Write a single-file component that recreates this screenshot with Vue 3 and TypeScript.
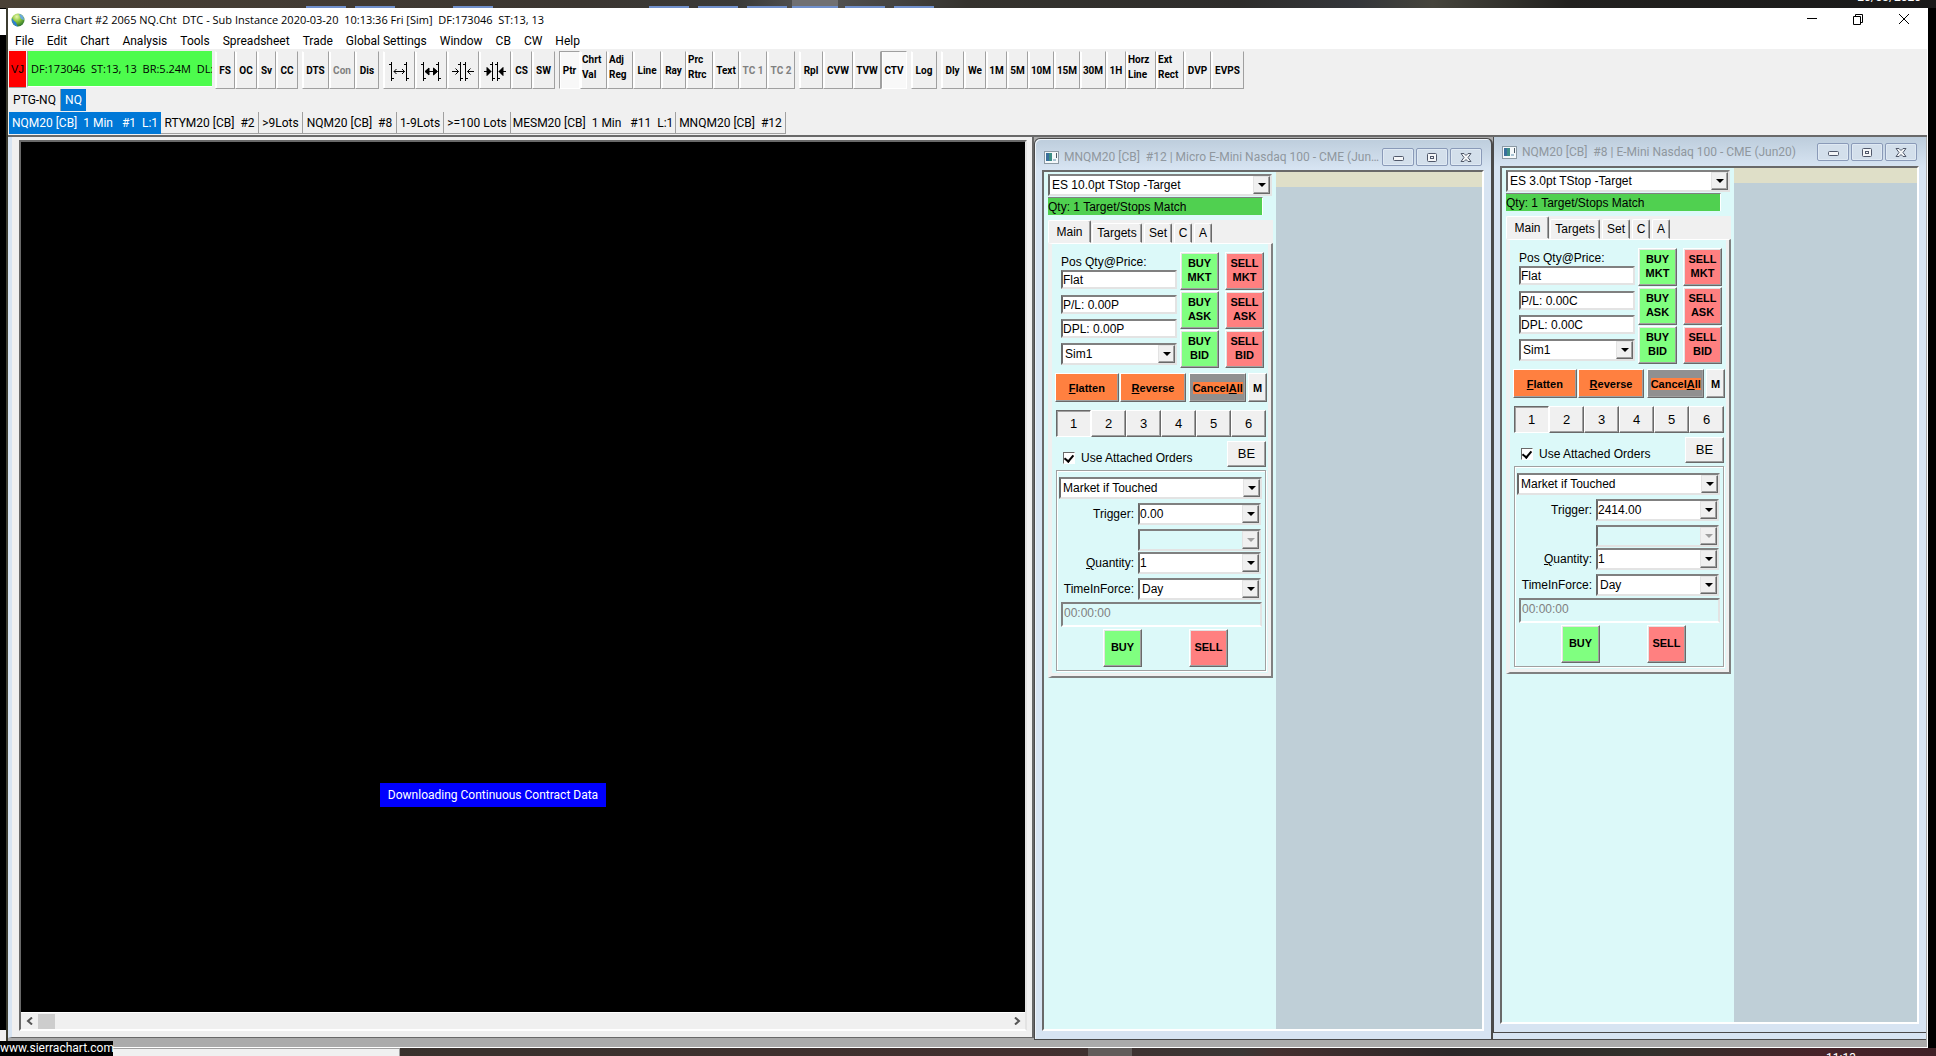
<script setup lang="ts">
import { ref } from 'vue'

interface ToolButton {
  label: string
  width: number
  icon?: 'out' | 'outBold' | 'in' | 'inBold'
  disabled?: boolean
  pressed?: boolean
}

interface TradeWindow {
  id: string
  title: string
  preset: string
  pl: string
  dpl: string
  trigger: string
}

const appTitle = 'Sierra Chart #2 2065 NQ.Cht  DTC - Sub Instance 2020-03-20  10:13:36 Fri [Sim]  DF:173046  ST:13, 13'
const feedStatus = 'DF:173046  ST:13, 13  BR:5.24M  DL:'

const menus: string[] = [
  'File', 'Edit', 'Chart', 'Analysis', 'Tools', 'Spreadsheet', 'Trade',
  'Global Settings', 'Window', 'CB', 'CW', 'Help',
]

const toolGroups: ToolButton[][] = [
  [
    { label: 'FS', width: 20 },
    { label: 'OC', width: 22 },
    { label: 'Sv', width: 19 },
    { label: 'CC', width: 22 },
  ],
  [
    { label: 'DTS', width: 27 },
    { label: 'Con', width: 26, disabled: true },
    { label: 'Dis', width: 24 },
  ],
  [
    { label: 'Widen bar spacing', width: 32, icon: 'out' },
    { label: 'Widen bars', width: 32, icon: 'outBold' },
    { label: 'Narrow bar spacing', width: 32, icon: 'in' },
    { label: 'Narrow bars', width: 32, icon: 'inBold' },
    { label: 'CS', width: 21 },
    { label: 'SW', width: 23 },
  ],
  [
    { label: 'Ptr', width: 21, pressed: true },
    { label: 'Chrt Val', width: 27 },
    { label: 'Adj Reg', width: 26 },
    { label: 'Line', width: 28 },
    { label: 'Ray', width: 25 },
    { label: 'Prc Rtrc', width: 27 },
    { label: 'Text', width: 26 },
    { label: 'TC 1', width: 28, disabled: true },
    { label: 'TC 2', width: 28, disabled: true },
  ],
  [
    { label: 'Rpl', width: 24 },
    { label: 'CVW', width: 30 },
    { label: 'TVW', width: 28 },
    { label: 'CTV', width: 26, pressed: true },
  ],
  [{ label: 'Log', width: 26 }],
  [
    { label: 'Dly', width: 23 },
    { label: 'We', width: 22 },
    { label: '1M', width: 21 },
    { label: '5M', width: 21 },
    { label: '10M', width: 26 },
    { label: '15M', width: 26 },
    { label: '30M', width: 26 },
    { label: '1H', width: 20 },
    { label: 'Horz Line', width: 30 },
    { label: 'Ext Rect', width: 28 },
    { label: 'DVP', width: 27 },
    { label: 'EVPS', width: 33 },
  ],
]

const chartTabs: { label: string; width: number }[] = [
  { label: 'NQM20 [CB]  1 Min   #1  L:1', width: 152 },
  { label: 'RTYM20 [CB]  #2', width: 98 },
  { label: '>9Lots', width: 44 },
  { label: 'NQM20 [CB]  #8', width: 94 },
  { label: '1-9Lots', width: 47 },
  { label: '>=100 Lots', width: 67 },
  { label: 'MESM20 [CB]  1 Min   #11  L:1', width: 165 },
  { label: 'MNQM20 [CB]  #12', width: 110 },
]

const tradeWindows: TradeWindow[] = [
  {
    id: 'mnq',
    title: 'MNQM20 [CB]  #12 | Micro E-Mini Nasdaq 100 - CME (Jun20)',
    preset: 'ES 10.0pt TStop -Target',
    pl: 'P/L: 0.00P',
    dpl: 'DPL: 0.00P',
    trigger: '0.00',
  },
  {
    id: 'nq',
    title: 'NQM20 [CB]  #8 | E-Mini Nasdaq 100 - CME (Jun20)',
    preset: 'ES 3.0pt TStop -Target',
    pl: 'P/L: 0.00C',
    dpl: 'DPL: 0.00C',
    trigger: '2414.00',
  },
]

const sides = ['MKT', 'ASK', 'BID']
const panelTabs = ['Main', 'Targets', 'Set', 'C', 'A']
const attached = ref<Record<string, boolean>>({ mnq: true, nq: true })
const activeTab = ref(0)
</script>

<template>
  <div class="desktop">
    <div class="strip strip-top">
      <span class="peek p1"></span><span class="peek p2"></span><span class="peek p3"></span>
      <span class="peek p4"></span><span class="peek p5"></span><span class="peek p6"></span>
      <span class="peek p7 lit"></span><span class="peek p8"></span><span class="peek p9"></span>
      <span class="clock-date">20/03/2020</span>
    </div>

    <div class="middle">
      <div class="edge-left"><span class="edge-top"></span><span class="edge-bottom"></span></div>
      <main class="app">
        <header class="title-bar">
          <svg class="globe" width="14" height="14" viewBox="0 0 14 14">
            <defs>
              <radialGradient id="globe" cx="40%" cy="25%" r="80%">
                <stop offset="0" stop-color="#e8f6b0" />
                <stop offset="0.45" stop-color="#8cc63a" />
                <stop offset="1" stop-color="#1f6a2c" />
              </radialGradient>
            </defs>
            <circle cx="7" cy="7" r="6.5" fill="url(#globe)" />
            <path d="M1 5C0 9 3 13 7 13.500C5 11 6 9 3 8Z" fill="#2c7fd0" />
            <path d="M8 1C11 1 13 4 13 7L10 6Z" fill="#69a8de" />
          </svg>
          <h1>{{ appTitle }}</h1>
          <div class="caption">
            <button type="button" aria-label="Minimize">
              <svg width="12" height="12"><path d="M1 5.500H11" /></svg>
            </button>
            <button type="button" aria-label="Restore">
              <svg width="12" height="12"><path d="M1.500 3.500H8.500V11.500H1.500ZM3.500 3.500V1.500H10.500V9.500H8.500" /></svg>
            </button>
            <button type="button" aria-label="Close">
              <svg width="12" height="12"><path d="M1 1L11 11M11 1L1 11" /></svg>
            </button>
          </div>
        </header>

        <nav class="menu">
          <button v-for="m in menus" :key="m" type="button">{{ m }}</button>
        </nav>

        <div class="tools">
          <button type="button" class="vj">VJ</button>
          <output class="status">{{ feedStatus }}</output>
          <div v-for="(group, g) in toolGroups" :key="g" class="tool-group">
            <button
              v-for="b in group"
              :key="b.label"
              type="button"
              class="tool"
              :class="{ pressed: b.pressed, tall: ['Chrt Val', 'Adj Reg', 'Prc Rtrc', 'Horz Line', 'Ext Rect'].includes(b.label) }"
              :disabled="b.disabled"
              :aria-label="b.label"
              :style="{ width: b.width + 'px' }"
            >
              <svg v-if="b.icon" width="30" height="36" viewBox="1 0 30 36">
                <template v-if="b.icon === 'out' || b.icon === 'outBold'">
                  <path d="M8.500 10V29M6 12.500H8.500M8.500 26.500H11M23.500 10V29M21 12.500H23.500M23.500 26.500H26" />
                  <path d="M11 19.500H21.500M13.500 17L11 19.500L13.500 22M19 17L21.500 19.500L19 22" />
                  <path v-if="b.icon === 'outBold'" d="M10 19.500L14 16V23ZM22.500 19.500L18.500 16V23Z" class="solid" />
                </template>
                <template v-else>
                  <path d="M13.500 10V29M11 12.500H13.500M13.500 26.500H16M18.500 10V29M16 12.500H18.500M18.500 26.500H21" />
                  <path d="M5 19.500H11.500M8.500 16.500L11.500 19.500L8.500 22.500M27 19.500H20.500M23.500 16.500L20.500 19.500L23.500 22.500" />
                  <path v-if="b.icon === 'inBold'" d="M12 19.500L8 15.500V23.500ZM20 19.500L24 15.500V23.500Z" class="solid" />
                </template>
              </svg>
              <span v-else>{{ b.label }}</span>
            </button>
          </div>
        </div>

        <div class="book-tabs">
          <button type="button">PTG-NQ</button>
          <button type="button" class="on">NQ</button>
        </div>
        <div class="chart-tabs">
          <button
            v-for="(t, i) in chartTabs"
            :key="t.label"
            type="button"
            :class="{ on: i === 0 }"
            :style="{ width: t.width + 'px' }"
          >{{ t.label }}</button>
        </div>

        <section class="mdi">
          <div class="chart-window">
            <div class="chart-inner">
              <div class="canvas"><p class="loading">Downloading Continuous Contract Data</p></div>
              <div class="scroll">
                <button type="button" aria-label="Scroll left">
                  <svg width="8" height="8"><path d="M6 0.500L2 4L6 7.500" /></svg>
                </button>
                <span class="thumb"></span>
                <button type="button" class="right" aria-label="Scroll right">
                  <svg width="8" height="8"><path d="M2 0.500L6 4L2 7.500" /></svg>
                </button>
              </div>
            </div>
          </div>

          <article v-for="w in tradeWindows" :key="w.id" class="trade-window" :class="w.id">
            <header class="sub-title">
              <svg class="sub-icon" width="15" height="13">
                <rect x="0.500" y="0.500" width="14" height="12" fill="#f4f8fa" stroke="#8c9aa4" />
                <rect x="2" y="2" width="6" height="8" fill="#3d8f86" />
                <rect x="2" y="2" width="3" height="8" fill="#3a6f9c" />
                <rect x="9" y="8" width="3" height="2" fill="#a9c4d4" />
                <rect x="12" y="2" width="1" height="5" fill="#4a5a66" />
              </svg>
              <h2>{{ w.title }}</h2>
              <button type="button" aria-label="Minimize">
                <svg width="12" height="9"><rect x="1.500" y="3.500" width="10" height="4" rx="1" /></svg>
              </button>
              <button type="button" aria-label="Restore">
                <svg width="12" height="9"><rect x="1.500" y="0.500" width="9" height="8" rx="1" /><rect x="4.500" y="3.500" width="3" height="2" /></svg>
              </button>
              <button type="button" aria-label="Close">
                <svg width="12" height="9"><path d="M1 0.500H4L6 2.500L8 0.500H11L8 4.500L11 8.500H8L6 6.500L4 8.500H1L4 4.500Z" /></svg>
              </button>
            </header>
            <div class="client">
              <div class="panel">
                <div class="combo preset">
                  <select aria-label="Order preset"><option>{{ w.preset }}</option></select><i></i>
                </div>
                <output class="match">Qty: 1 Target/Stops Match</output>

                <div class="panel-tabs">
                  <button
                    v-for="(t, i) in panelTabs"
                    :key="t"
                    type="button"
                    :class="['t' + i, { on: i === activeTab }]"
                    @click="activeTab = i"
                  >{{ t }}</button>
                </div>

                <div class="sheet">
                  <div class="top">
                    <div class="position">
                      <label :for="w.id + '-pos'">Pos Qty@Price:</label>
                      <input :id="w.id + '-pos'" class="field" value="Flat" readonly />
                      <input class="field pl" aria-label="Profit and loss" :value="w.pl" readonly />
                      <input class="field dpl" aria-label="Daily profit and loss" :value="w.dpl" readonly />
                      <div class="combo account">
                        <select aria-label="Account"><option>Sim1</option></select><i></i>
                      </div>
                    </div>
                    <div class="deals">
                      <template v-for="s in sides" :key="s">
                        <button type="button" class="deal buy">BUY<br />{{ s }}</button>
                        <button type="button" class="deal sell">SELL<br />{{ s }}</button>
                      </template>
                    </div>
                  </div>

                  <div class="actions">
                    <button type="button" class="flatten"><u>F</u>latten</button>
                    <button type="button" class="reverse"><u>R</u>everse</button>
                    <button type="button" class="cancel"><span>Cancel<u>A</u>ll</span></button>
                    <button type="button" class="m">M</button>
                  </div>

                  <div class="sizes">
                    <button v-for="n in 6" :key="n" type="button" :class="{ on: n === 1 }">{{ n }}</button>
                  </div>

                  <div class="attach">
                    <label><input v-model="attached[w.id]" type="checkbox" />Use Attached Orders</label>
                    <button type="button">BE</button>
                  </div>

                  <form class="order" @submit.prevent>
                    <div class="combo type">
                      <select aria-label="Order type"><option>Market if Touched</option></select><i></i>
                    </div>
                    <div class="line">
                      <label :for="w.id + '-trigger'">Trigger:</label>
                      <div class="combo edit">
                        <select :id="w.id + '-trigger'"><option>{{ w.trigger }}</option></select><i></i>
                      </div>
                    </div>
                    <div class="line close">
                      <span></span>
                      <div class="combo off"><select aria-label="Second price" disabled><option></option></select><i></i></div>
                    </div>
                    <div class="line">
                      <label :for="w.id + '-qty'"><u>Q</u>uantity:</label>
                      <div class="combo edit"><select :id="w.id + '-qty'"><option>1</option></select><i></i></div>
                    </div>
                    <div class="line close">
                      <label :for="w.id + '-tif'">TimeInForce:</label>
                      <div class="combo"><select :id="w.id + '-tif'"><option>Day</option></select><i></i></div>
                    </div>
                    <input class="time" aria-label="Expiry time" value="00:00:00" disabled />
                    <div class="send">
                      <button type="button" class="deal buy">BUY</button>
                      <button type="button" class="deal sell">SELL</button>
                    </div>
                  </form>
                </div>
              </div>
              <div class="plot"></div>
            </div>
          </article>
        </section>
      </main>
      <div class="edge-right"></div>
    </div>

    <div class="strip strip-bottom">
      <span class="doc"></span>
      <span class="glow"></span>
      <span class="clock-time">11:13</span>
    </div>
    <a class="link-tip" href="#">www.sierrachart.com</a>
  </div>
</template>

<style>
html, body { margin: 0; background: #000; }
</style>

<style scoped>
* { box-sizing: border-box; }
button, input, select { margin: 0; padding: 0; font: inherit; color: inherit; border-radius: 0; }
button { border: 0; background: none; }
h1, h2, p { margin: 0; font-weight: 400; }

.desktop {
  position: relative;
  display: flex;
  flex-direction: column;
  min-height: 100vh;
  background: #000;
  color: #000;
  font: 12px/16px Roboto, "Noto Sans", sans-serif;
  overflow: hidden;
}
.strip { position: relative; flex: none; height: 8px; overflow: hidden; color: #fff; }
.strip-top { background: linear-gradient(90deg, #4a4136, #3b3631 30%, #3a3a38 38%, #555 42%, #35332e 50%, #2e2d2b 64%, #34363a 70%, #45443c 74%, #22211f 81%, #191919 100%); }
.peek { position: absolute; top: 6px; height: 2px; width: 40px; background: #7090cc; }
.p1 { left: 306px; } .p2 { left: 355px; } .p3 { left: 453px; } .p4 { left: 649px; }
.p5 { left: 698px; } .p6 { left: 747px; } .p7 { left: 792px; } .p8 { left: 845px; } .p9 { left: 894px; }
.lit { top: 0; width: 46px; height: 8px; background: #707072; border-bottom: 2px solid #7090cc; }
.clock-date { position: absolute; right: 15px; bottom: 3px; font-size: 12px; line-height: 16px; }

.middle { flex: 1; display: flex; min-height: 0; }
.edge-left { flex: none; width: 8px; display: flex; flex-direction: column; justify-content: space-between; border-right: 2px solid #3c3c30; background: #000; }
.edge-top { height: 27px; border-top: 1px solid #000; background: #fff; }
.edge-bottom { height: 18px; background: #f0f0f0; }
.edge-right { flex: none; width: 8px; background: #000; }

.app { flex: 1; min-width: 0; display: flex; flex-direction: column; background: #f0f0f0; border-bottom: 1px solid #fff; border-right: 1px solid #fff; }

.title-bar { display: flex; align-items: center; height: 22px; padding: 1px 0 0 3px; background: #fff; }
.globe { flex: none; margin-right: 6px; }
h1 { flex: 1; font: 11px/16px "Open Sans", "Noto Sans", sans-serif; white-space: pre; }
.caption { display: flex; align-items: center; padding-bottom: 2px; }
.caption button { width: 46px; height: 16px; line-height: 0; }
.caption path { fill: none; stroke: #000; }

.menu { display: flex; gap: 13px; height: 19px; padding: 3px 0 0 7px; background: #fff; }
.menu button { line-height: 16px; height: 16px; white-space: nowrap; }

.tools { display: flex; height: 40px; padding: 2px 0 1px 1px; }
.vj { width: 17px; height: 37px; margin-right: 1px; background: #f00; font: 11px/37px "Liberation Sans", sans-serif; border-bottom: 1px solid #a0a0a0; }
.status { width: 185px; height: 36px; margin-right: 3px; padding-left: 3px; background: #4dfc4d; border-left: 1px solid #a0a0a0; border-bottom: 1px solid #fff; font: 11px/35px "Open Sans", "Noto Sans", sans-serif; white-space: pre; overflow: hidden; }
.tool-group { display: flex; margin-right: 4px; }
.tool {
  flex: none; height: 38px; display: flex; align-items: center; justify-content: center;
  border: 1px solid; border-color: #f0f0f0 #a0a0a0 #a0a0a0 #fff;
  box-shadow: inset 1px 0 #fff;
  font: bold 10px/15px Roboto, "Liberation Sans", sans-serif;
  white-space: nowrap; color: #000;
}
.tool.tall { white-space: normal; text-align: left; justify-content: flex-start; padding: 0 0 6px 1px; }
.tool:disabled { color: #808080; }
.tool.pressed { background: #f8f8f8; border-color: #a0a0a0 #fff #fff #a0a0a0; }
.tool path { fill: none; stroke: #000; }
.tool .solid { fill: #000; }

.book-tabs, .chart-tabs { display: flex; height: 23px; padding-left: 1px; }
.book-tabs button { height: 22px; width: 52px; border-right: 1px solid #a0a0a0; line-height: 22px; }
.book-tabs .on { width: 25px; border: 0; background: #0078d7; color: #fff; }
.chart-tabs button { height: 22px; border-right: 1px solid #a0a0a0; border-bottom: 1px solid #a0a0a0; white-space: pre; line-height: 22px; text-align: center; overflow: hidden; }
.chart-tabs .on { background: #0078d7; color: #fff; border: 0; }

.mdi { flex: 1; display: grid; grid-template-columns: minmax(0, 1026fr) minmax(0, 459fr) minmax(0, 433fr); padding: 0 1px 7px 0; background: #ababab; border-top: 2px solid #696969; }
.chart-window { min-width: 0; display: flex; padding: 3px 5px 6px 7px; margin-bottom: 2px; background: #f0f0f0; border: solid #696969; border-width: 0 2px 1px 0; border-left: 4px solid #d7e4f2; }
.chart-inner { flex: 1; display: flex; flex-direction: column; border: 2px solid; border-color: #696969 #e3e3e3 #fff #696969; }
.canvas { flex: 1; display: flex; justify-content: center; align-items: flex-end; padding: 0 60px 205px 0; background: #000; }
.loading { padding: 4px 8px; background: #00f; color: #fff; white-space: nowrap; }
.scroll { flex: none; display: flex; align-items: center; height: 17px; background: #f0f0f0; border-top: 1px solid #fff; }
.scroll button { width: 17px; height: 16px; line-height: 0; }
.scroll .right { margin-left: auto; }
.scroll path { fill: none; stroke: #555; stroke-width: 2; }
.thumb { width: 17px; height: 15px; background: #cdcdcd; }

.trade-window { display: flex; flex-direction: column; min-width: 0; padding: 0 8px 8px 7px; background: linear-gradient(#bdcddc, #d7e4f2 30px); border: 1px solid #4a4a4a; }
.mnq { margin-top: 1px; border-right-width: 2px; padding-right: 7px; border-radius: 6px 6px 0 0; box-shadow: inset 1px 1px #eef4fa; }
.nq { margin-bottom: 7px; padding: 0 7px 8px 6px; border-width: 0 0 1px 1px; box-shadow: 0 6px #d7e4f2, 0 7px #4a4a4a; }
.sub-title { flex: none; display: flex; align-items: center; height: 31px; padding: 5px 2px 0; color: #8f979e; }
.nq .sub-title { height: 29px; padding-top: 1px; }
.sub-icon { flex: none; margin-right: 5px; }
h2 { flex: 1; min-width: 0; font-size: 12px; line-height: 16px; white-space: pre; overflow: hidden; text-overflow: ellipsis; }
.sub-title button { flex: none; width: 32px; height: 18px; margin-left: 2px; border: 1px solid #8a9ab8; border-radius: 2px; background: #d3dfeb; box-shadow: inset 0 0 0 1px #dfe9f3; line-height: 0; }
.sub-title button svg { fill: #f4f6f8; stroke: #50586a; }

.client { flex: 1; display: flex; border: 2px solid; border-color: #696969 #fff #fff #696969; background: #bfcfd7; font: 13px/16px "Liberation Sans", Arial, sans-serif; }
.panel { flex: none; width: 232px; padding: 2px 3px 0 4px; background: #dcf9f9; }
.plot { flex: 1; height: 15px; background: #dfdfc8; }

.combo { position: relative; height: 22px; border: 2px solid; border-color: #808080 #e3e3e3 #e3e3e3 #696969; background: #fff; }
.combo select { display: block; width: 100%; height: 18px; padding-left: 2px; border: 0; outline: 0; appearance: none; background: transparent; font-size: 12px; line-height: 18px; color: #000; opacity: 1; }
.combo i { position: absolute; top: 0; right: 0; bottom: 0; width: 17px; border: 1px solid; border-color: #e3e3e3 #696969 #696969 #e3e3e3; box-shadow: inset -1px -1px #a0a0a0; background: #f0f0f0; pointer-events: none; }
.combo i::after { content: ""; position: absolute; left: 4px; top: 6px; border: 4px solid transparent; border-top-color: #000; border-bottom: 0; }
.combo.off, .combo.off select { background: #dcf9f9; }
.combo.off i::after { border-top-color: #a0a0a0; }
.combo.edit select { padding-left: 0; }

.preset { width: 224px; }
.match { display: block; width: 215px; height: 18px; margin-top: 1px; background: #50d050; border-top: 1px solid #808080; border-right: 1px solid #fff; font-size: 12px; line-height: 18px; }

.panel-tabs { display: flex; align-items: flex-end; height: 23px; margin-top: 5px; background: #f0f0f0; }
.panel-tabs button { height: 20px; margin-right: 2px; border: 1px solid; border-color: #fff #696969 transparent #fff; border-radius: 2px 2px 0 0; box-shadow: inset -1px 0 #a0a0a0; font-size: 12px; line-height: 18px; }
.panel-tabs .on { height: 23px; margin-right: 1px; }
.panel-tabs .t0 { width: 43px; }
.panel-tabs .t1 { width: 50px; }
.panel-tabs .t2 { width: 28px; }
.panel-tabs .t3 { width: 18px; }
.panel-tabs .t4 { width: 18px; }

.sheet { padding: 8px 4px 5px 3px; border: solid; border-width: 1px 2px 2px 4px; border-color: #fff #808080 #808080 #f0f0f0; background: #dcf9f9; box-shadow: inset -3px -3px #f0f0f0; }
.top { display: flex; justify-content: space-between; padding: 0 3px 0 6px; }
.position { display: flex; flex-direction: column; width: 116px; }
.position label { height: 18px; padding-top: 2px; font-size: 12px; line-height: 16px; white-space: nowrap; }
.field { width: 116px; height: 19px; padding: 0; border: 2px solid; border-color: #808080 #e3e3e3 #e3e3e3 #696969; outline: 0; background: #fff; font-size: 12px; line-height: 15px; }
.pl { margin-top: 6px; }
.dpl { margin: 5px 0; }
.deals { display: grid; grid-template-columns: 39px 39px; gap: 1px 6px; }
.deal { width: 39px; height: 38px; padding-bottom: 2px; border: 1px solid; border-color: #fff #696969 #696969 #fff; box-shadow: inset -1px -1px #a0a0a0, inset 1px 1px #e3e3e3; font: bold 11px/14px "Liberation Sans", Arial, sans-serif; }
.buy { background: #80ff80; }
.sell { background: #ff8080; }

.actions { display: flex; height: 29px; margin-top: 5px; }
.actions button { border: 1px solid; border-color: #fff #696969 #696969 #fff; box-shadow: inset -1px -1px #a0a0a0; background: #ff8040; font-weight: bold; font-size: 11px; line-height: 14px; }
.actions .flatten { width: 64px; margin-right: 1px; }
.actions .reverse { width: 67px; margin-right: 3px; }
.actions .cancel { width: 57px; margin-right: 2px; background: #909090; }
.actions .cancel span { background: #ff8040; }
.actions .m { width: 19px; background: #f0f0f0; }

.sizes { display: flex; margin: 8px 1px 0; }
.sizes button { width: 35px; height: 27px; border: 1px solid; border-color: #fff #696969 #696969 #fff; box-shadow: inset -1px -1px #a0a0a0; background: #f0f0f0; font-size: 13px; }
.sizes .on { border-color: #696969 #fff #fff #696969; box-shadow: inset 1px 1px #a0a0a0; }

.attach { display: flex; align-items: center; justify-content: space-between; margin-top: 4px; padding: 0 1px 0 8px; }
.attach label { display: flex; align-items: center; gap: 6px; padding-top: 7px; font-size: 12px; line-height: 16px; }
.attach input { position: relative; width: 12px; height: 12px; appearance: none; border: 1px solid; border-color: #696969 #fff #fff #696969; background: #fff; }
.attach input:checked::after { content: ""; position: absolute; left: 2px; top: 0; width: 4px; height: 7px; border: solid #000; border-width: 0 2px 2px 0; transform: rotate(40deg); }
.attach button { width: 39px; height: 26px; border: 1px solid; border-color: #fff #696969 #696969 #fff; box-shadow: inset -1px -1px #a0a0a0; background: #f0f0f0; font-size: 13px; }

.order { width: 210px; height: 201px; margin: 3px 0 0 1px; padding: 6px 3px 0 2px; border: 1px solid #a0a0a0; box-shadow: 1px 1px #fff, inset 1px 1px #fff; }
.type { width: 203px; }
.line { display: flex; align-items: flex-start; margin-top: 4px; padding-right: 1px; }
.line label, .line > span { width: 79px; padding: 3px 4px 0 0; font-size: 12px; line-height: 16px; text-align: right; white-space: nowrap; }
.line .combo { flex: 1; }
.line.close + .line { margin-top: 1px; }
.time { display: block; width: 201px; height: 25px; margin: 2px 0 0 2px; padding: 0 1px 4px; border: 2px solid; border-color: #808080 #e3e3e3 #fff #808080; background: #dcf9f9; color: #808080; font-size: 12px; line-height: 18px; }
.send { display: flex; gap: 47px; margin-top: 2px; padding-left: 44px; }

.strip-bottom { background: linear-gradient(90deg, #38302d, #3a322e 25%, #42302f 54%, #3a3735 64%, #44302f 66%, #2b2728 75%, #32312c 85%, #472329 94%, #3f2026 100%); }
.doc { position: absolute; left: 0; top: 0; width: 400px; height: 8px; background: #f0f0f0; border-top: 1px solid #a0a0a0; border-right: 1px solid #a0a0a0; }
.glow { position: absolute; left: 1088px; top: 0; width: 44px; height: 8px; background: #625d5b; }
.clock-time { position: absolute; right: 80px; top: 2px; line-height: 16px; }
.link-tip { position: absolute; left: 0; bottom: 0; width: 113px; height: 15px; background: #000; color: #fff; text-decoration: none; line-height: 15px; white-space: nowrap; }
</style>
